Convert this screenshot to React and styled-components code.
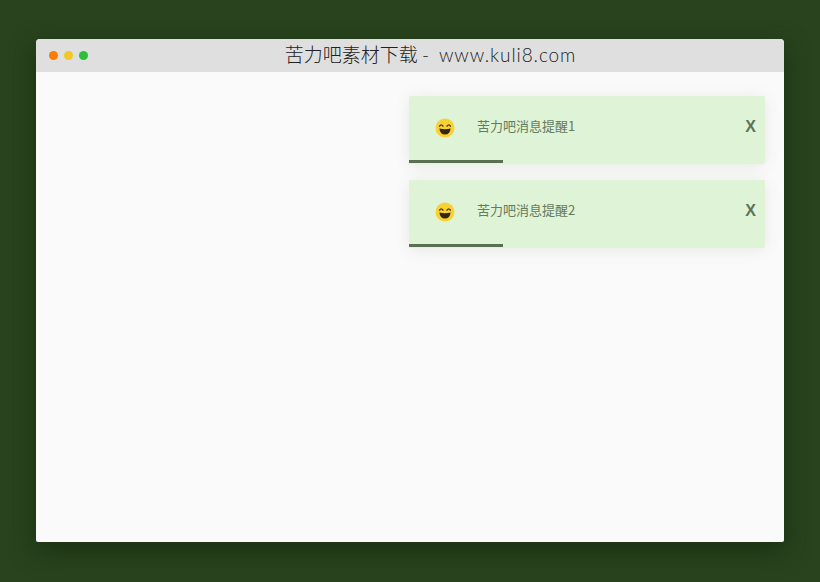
import React from "react";
import styled, { createGlobalStyle } from "styled-components";

const GlobalStyle = createGlobalStyle`
  html, body {
    margin: 0;
    padding: 0;
    background: #29431e;
  }
`;

const Page = styled.div`
  width: 820px;
  height: 582px;
  padding: 39px 36px 40px;
  box-sizing: border-box;
  overflow: hidden;
`;

const Window = styled.div`
  height: 503px;
  display: flex;
  flex-direction: column;
  border-radius: 4px 4px 2px 2px;
  overflow: hidden;
  background: #fafafa;
  box-shadow: 0 8px 24px rgba(20, 40, 10, 0.7);
`;

const TitleBar = styled.div`
  position: relative;
  height: 33px;
  flex: none;
  display: flex;
  align-items: center;
  justify-content: center;
  background: #dfdfdf;
`;

const Lights = styled.div`
  position: absolute;
  left: 13px;
  top: 12px;
  display: flex;
  gap: 6px;
`;

const Light = styled.span`
  width: 9px;
  height: 9px;
  border-radius: 50%;
  background: ${(p) => p.$color};
`;

const Title = styled.div`
  margin: 0 0 4px 41px;
  font-family: "Noto Sans CJK SC", "Noto Sans", sans-serif;
  font-size: 19px;
  font-weight: 300;
  color: #222;
  white-space: nowrap;
`;

const TitleLatin = styled.span`
  font-family: "Lato", "Noto Sans", sans-serif;
  font-weight: 300;
  letter-spacing: 0.9px;
  word-spacing: 3px;
`;

const Body = styled.div`
  flex: 1;
  display: flex;
  flex-direction: column;
  align-items: flex-end;
  gap: 16px;
  padding: 24px 19px 0 0;
`;

const Toast = styled.div`
  position: relative;
  width: 356px;
  height: 68px;
  display: flex;
  align-items: center;
  padding: 0 9px 4px 26px;
  box-sizing: border-box;
  border-radius: 2px;
  background: #dff3d6;
  box-shadow: 0 2px 16px rgba(60, 90, 40, 0.1);
`;

const Message = styled.div`
  flex: 1;
  margin: 0 0 5px 22px;
  font-family: "Noto Sans CJK SC", "Roboto", sans-serif;
  font-size: 13px;
  font-weight: 400;
  color: #667b5d;
`;

const Close = styled.div`
  margin-bottom: 2px;
  font-family: "Liberation Sans", sans-serif;
  font-size: 16px;
  font-weight: 700;
  color: #5e7256;
`;

const Progress = styled.div`
  position: absolute;
  left: 0;
  bottom: 1px;
  height: 3px;
  background: #5b7052;
`;

function Smile() {
  return (
    <svg width="20" height="20" viewBox="0 0 20 20">
      <circle cx="10" cy="10" r="9.5" fill="#fad133" />
      <path d="M4.6 8.2 Q6.2 5.6 8 8.2" fill="none" stroke="#4a3a20" strokeWidth="1.4" strokeLinecap="round" />
      <path d="M12 8.2 Q13.8 5.6 15.4 8.2" fill="none" stroke="#4a3a20" strokeWidth="1.4" strokeLinecap="round" />
      <path d="M4.4 10.4 Q10 12 15.6 10.4 Q15 16.4 10 16.4 Q5 16.4 4.4 10.4 Z" fill="#33280f" />
    </svg>
  );
}

const toasts = ["苦力吧消息提醒1", "苦力吧消息提醒2"];

export default function App() {
  return (
    <Page>
      <GlobalStyle />
      <Window>
        <TitleBar>
          <Lights>
            <Light $color="#fb7c05" />
            <Light $color="#f1c824" />
            <Light $color="#2fbe3a" />
          </Lights>
          <Title>
            苦力吧素材下载 <TitleLatin>- www.kuli8.com</TitleLatin>
          </Title>
        </TitleBar>
        <Body>
          {toasts.map((text) => (
            <Toast key={text}>
              <Smile />
              <Message>{text}</Message>
              <Close>X</Close>
              <Progress style={{ width: "94px" }} />
            </Toast>
          ))}
        </Body>
      </Window>
    </Page>
  );
}
